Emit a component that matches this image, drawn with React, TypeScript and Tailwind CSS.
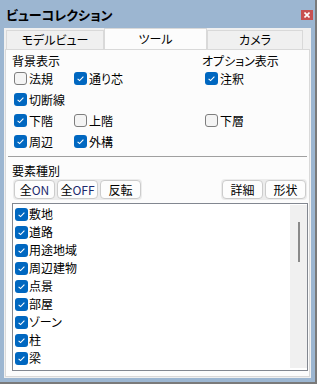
import React from 'react';

const Check = ({ on }: { on: boolean }) =>
    on ? (
        <span className="w-[13px] h-[13px] shrink-0 rounded-[3px] bg-[#0067c0] flex items-center justify-center">
            <svg width="9" height="9" viewBox="0 0 9 9">
                <path d="M1.6 4.8 L3.6 6.6 L7.4 2.6" fill="none" stroke="#ffffff" strokeWidth="1.1" />
            </svg>
        </span>
    ) : (
        <span className="w-[13px] h-[13px] shrink-0 rounded-[3px] bg-[#f4f4f4] border border-[#7e7e7e]" />
    );

const Item = ({ on, label, w }: { on: boolean; label: string; w?: string }) => (
    <div className={`flex items-center gap-[2px] ${w ?? ''}`}>
        <Check on={on} />
        <span>{label}</span>
    </div>
);

const Btn = ({ children }: { children: React.ReactNode }) => (
    <button className="h-[19px] w-[41px] rounded-[4px] border border-[#cccccc] bg-[#fdfdfd] text-[12px] leading-none text-black">
        {children}
    </button>
);

const elements = ['敷地', '道路', '用途地域', '周辺建物', '点景', '部屋', 'ゾーン', '柱', '梁'];

export default function App() {
    return (
        <div className="w-[320px] h-[384px] bg-white text-[12px] text-black font-['Noto_Sans_CJK_JP',sans-serif] [font-feature-settings:'palt']">
            <div className="w-[317px] h-[384px] flex flex-col bg-[#9cb6d1] border-r-2 border-b-2 border-[#7a7a7a]">
                {/* title bar */}
                <div className="h-[28px] shrink-0 flex items-center justify-between pl-[6px] pr-[2px]">
                    <span className="text-[13px] font-bold leading-none">ビューコレクション</span>
                    <span className="w-[12px] h-[10px] mt-[2px] bg-[#c75050] flex items-center justify-center">
                        <svg width="6" height="6" viewBox="0 0 6 6">
                            <path d="M0.5 0.5 L5.5 5.5 M5.5 0.5 L0.5 5.5" stroke="#ffffff" strokeWidth="1.6" />
                        </svg>
                    </span>
                </div>

                <div className="flex-1 mx-[4px] mb-[4px] bg-[#f0f0f0] flex flex-col">
                    {/* tabs */}
                    <div className="h-[21px] shrink-0 flex items-end pl-[2px]">
                        <div className="w-[98px] h-[19px] border border-b-0 border-[#d9d9d9] flex items-center justify-center">モデルビュー</div>
                        <div className="w-[103px] h-[21px] border border-b-0 border-[#d9d9d9] bg-[#fcfcfc] flex items-center justify-center">ツール</div>
                        <div className="w-[96px] h-[19px] border border-b-0 border-[#d9d9d9] flex items-center justify-center">カメラ</div>
                    </div>

                    {/* panel */}
                    <div className="flex-1 ml-[1px] mr-[1px] mb-[1px] border border-[#d9d9d9] bg-[#fcfcfc] flex flex-col">
                        <div className="flex pl-[6px] pt-[3px]">
                            <div className="w-[190px]">
                                <div className="h-[15px] leading-[15px]">背景表示</div>
                                <div className="pl-[2px]">
                                    <div className="h-[21px] flex items-center">
                                        <Item on={false} label="法規" w="w-[60px]" />
                                        <Item on label="通り芯" />
                                    </div>
                                    <div className="h-[21px] flex items-center">
                                        <Item on label="切断線" />
                                    </div>
                                    <div className="h-[21px] flex items-center">
                                        <Item on label="下階" w="w-[60px]" />
                                        <Item on={false} label="上階" />
                                    </div>
                                    <div className="h-[21px] flex items-center">
                                        <Item on label="周辺" w="w-[60px]" />
                                        <Item on label="外構" />
                                    </div>
                                </div>
                            </div>
                            <div>
                                <div className="h-[15px] leading-[15px]">オプション表示</div>
                                <div className="pl-[3px]">
                                    <div className="h-[21px] flex items-center">
                                        <Item on label="注釈" />
                                    </div>
                                    <div className="h-[21px]" />
                                    <div className="h-[21px] flex items-center">
                                        <Item on={false} label="下層" />
                                    </div>
                                </div>
                            </div>
                        </div>

                        <div className="mt-[4px] mx-[2px] h-px bg-[#a0a0a0]" />

                        <div className="pl-[6px] mt-[6px] h-[15px] leading-[15px]">要素種別</div>

                        <div className="mt-[1px] h-[21px] flex justify-between pl-[7px] pr-[2px]">
                            <div className="flex gap-[2px] bg-[#ececec] p-[1px] rounded-[4px]">
                                <Btn>全<span className="text-[#1c2a6e]">ON</span></Btn>
                                <Btn>全<span className="text-[#1c2a6e]">OFF</span></Btn>
                                <Btn>反転</Btn>
                            </div>
                            <div className="flex gap-[2px] bg-[#ececec] p-[1px] rounded-[4px]">
                                <Btn>詳細</Btn>
                                <Btn>形状</Btn>
                            </div>
                        </div>

                        {/* element list */}
                        <div className="mt-[3px] ml-[6px] w-[296px] h-[168px] border border-[#828790] bg-white flex">
                            <div className="flex-1 pt-[1px] pl-[2px]">
                                {elements.map((e) => (
                                    <div key={e} className="h-[18px] flex items-center gap-[1px]">
                                        <Check on />
                                        <span>{e}</span>
                                    </div>
                                ))}
                            </div>
                            <div className="w-[17px] mt-[1px] mb-[2px] bg-[#f0f0f0] flex flex-col items-center pt-[17px]">
                                <div className="w-[2px] h-[40px] bg-[#8a8a8a]" />
                            </div>
                        </div>
                    </div>
                </div>
            </div>
        </div>
    );
}
